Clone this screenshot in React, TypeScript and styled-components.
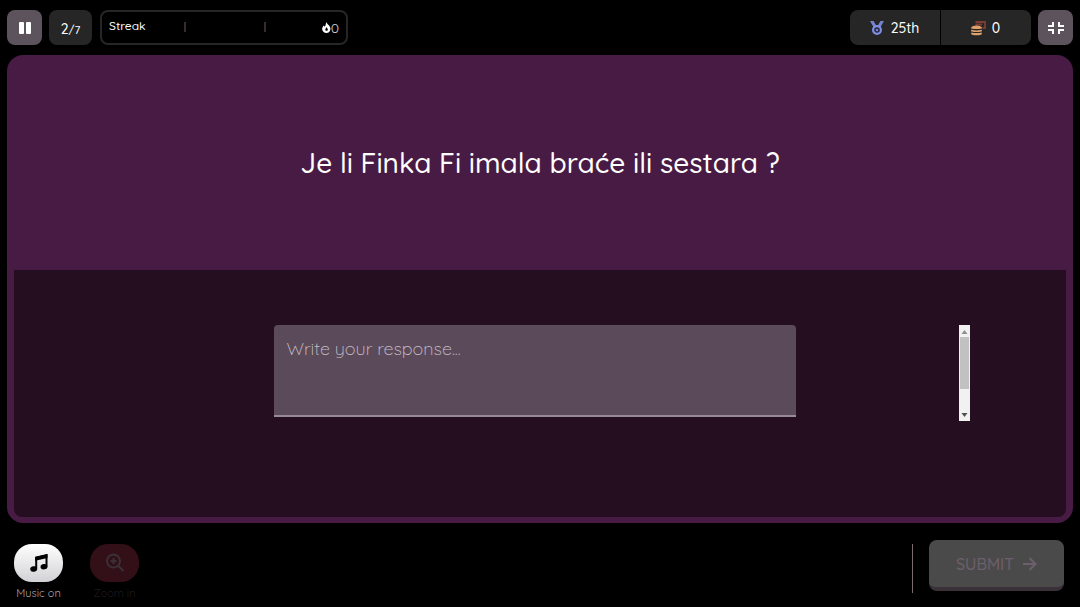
import React from "react";
import styled, { createGlobalStyle } from "styled-components";

const GlobalStyle = createGlobalStyle`
  *, *::before, *::after { box-sizing: border-box; }
  body {
    margin: 0;
    background: #000;
    color: #fff;
    font-family: Quicksand, "Open Sans", "Noto Sans", sans-serif;
    font-weight: 500;
  }
  button, textarea { font: inherit; color: inherit; }
`;

const Page = styled.div`
  display: flex;
  flex-direction: column;
  min-height: 100vh;
`;

const Header = styled.header`
  display: flex;
  justify-content: space-between;
  padding: 10px 7px;
`;

const Group = styled.div<{ $gap: number }>`
  display: flex;
  gap: ${(p) => p.$gap}px;
`;

const IconButton = styled.button`
  display: grid;
  place-items: center;
  width: 35px;
  height: 35px;
  padding: 0;
  border: 0;
  border-radius: 8px;
  background: #5d535c;
`;

const Counter = styled.div`
  display: flex;
  align-items: baseline;
  justify-content: center;
  width: 43px;
  height: 35px;
  border-radius: 8px;
  background: #262626;
  font-size: 14px;
  line-height: 38px;
`;

const Total = styled.span`
  font-size: 11px;
`;

const Streak = styled.div`
  display: flex;
  width: 248px;
  height: 35px;
  margin-left: 1px;
  padding: 0 7px;
  border: 2px solid #262626;
  border-radius: 8px;
  font-size: 12px;
`;

const StreakLabel = styled.span`
  width: 75px;
  line-height: 28px;
`;

const Tick = styled.span`
  width: 2px;
  height: 10px;
  margin-top: 10px;
  background: #332d31;
`;

const StreakGap = styled.span`
  width: 78px;
`;

const StreakCount = styled.span`
  display: flex;
  flex: 1;
  align-items: center;
  justify-content: flex-end;
  color: #d0cbd0;
  font-size: 14px;
  font-weight: 400;
`;

const Stats = styled.div`
  display: flex;
  gap: 1px;
  border-radius: 8px;
  overflow: hidden;
`;

const Stat = styled.div`
  display: flex;
  align-items: center;
  justify-content: center;
  gap: 6px;
  width: 90px;
  height: 35px;
  padding-right: 2px;
  background: #262626;
  font-size: 14px;
`;

const Card = styled.main`
  display: flex;
  flex: 1;
  flex-direction: column;
  margin: 0 7px;
  padding: 0 7px 6px;
  border-radius: 16px;
  background: #481b44;
`;

const Question = styled.h1`
  display: grid;
  place-items: center;
  min-height: 215px;
  margin: 0;
  font-size: 28px;
  font-weight: 500;
  text-align: center;
`;

const Answer = styled.section`
  flex: 1;
  padding: 55px 96px;
  border-radius: 0 0 8px 8px;
  background: #240e20;
`;

const ScrollArea = styled.div`
  display: flex;
  height: 96px;
`;

const FieldSlot = styled.div`
  display: flex;
  flex: 1;
  justify-content: center;
`;

const Response = styled.textarea`
  display: block;
  width: 62%;
  max-width: 522px;
  height: 92px;
  padding: 12px 13px;
  border: 0;
  border-bottom: 2px solid #958a95;
  border-radius: 4px 4px 0 0;
  outline: 0;
  resize: none;
  background: #5b4a5a;
  font-size: 18px;
  font-weight: 300;
  line-height: 24px;
  &::placeholder { color: #c9c0c9; opacity: 1; }
`;

const ScrollTrack = styled.div`
  display: flex;
  flex-direction: column;
  align-items: center;
  width: 11px;
  background: #f1f1f1;
`;

const ScrollThumb = styled.div`
  width: 9px;
  height: 52px;
  background: #c1c1c1;
`;

const ScrollArrow = styled.svg`
  display: block;
  flex: none;
  width: 11px;
  height: 12px;
`;

const Spacer = styled.div`
  flex: 1;
`;

const Footer = styled.footer`
  display: flex;
  justify-content: space-between;
  height: 84px;
  padding: 17px 16px 0 14px;
`;

const Tool = styled.button<{ $muted?: boolean }>`
  display: flex;
  flex-direction: column;
  align-items: center;
  width: 49px;
  height: 62px;
  margin-top: 4px;
  padding: 0;
  border: 0;
  background: none;
  color: ${(p) => (p.$muted ? "#1f191c" : "#b0a0ae")};
  font-size: 11px;
  font-weight: 400;
  line-height: 22px;
  white-space: nowrap;
`;

const Pill = styled.span<{ $muted?: boolean }>`
  display: grid;
  place-items: center;
  width: 49px;
  height: 38px;
  border-radius: 18px;
  background: ${(p) => (p.$muted ? "#330f18" : "linear-gradient(#fff, #d2d2d6)")};
`;

const Divider = styled.span`
  width: 1px;
  height: 49px;
  margin-top: 4px;
  background: #7a6b75;
`;

const Submit = styled.button`
  display: flex;
  align-items: center;
  justify-content: center;
  gap: 8px;
  width: 135px;
  height: 51px;
  padding: 0;
  border: 0;
  border-bottom: 4px solid #3a3238;
  border-radius: 8px;
  background: #4a4a4a;
  color: #6d606c;
  font-size: 16px;
`;

export default function App() {
  return (
    <Page>
      <GlobalStyle />
      <Header>
        <Group $gap={7}>
          <IconButton aria-label="Pause">
            <svg width="14" height="14" viewBox="0 0 14 14" fill="#fff">
              <rect x="1" y="1" width="5" height="12" rx="1" />
              <rect x="8" y="1" width="5" height="12" rx="1" />
            </svg>
          </IconButton>
          <Counter>2<Total>/7</Total></Counter>
          <Streak>
            <StreakLabel>Streak</StreakLabel>
            <Tick />
            <StreakGap />
            <Tick />
            <StreakCount>
              <svg width="9" height="11" viewBox="0 0 9 11">
                <path d="M4.4 0C4.8 2 7 2.800 8 5C9.300 8.200 7.200 11 4.500 11C1.600 11-.4 8.700.3 6C.6 4.700 1.300 4 1.900 3.400L2.600 4.800C3.900 3.500 3.800 1.500 4.400 0Z" fill="#fff" />
                <path d="M4.600 5C5 6.200 6 6.600 5.800 7.900C5.500 9.100 3.700 9.100 3.300 7.900C3 6.800 4.300 6.200 4.600 5Z" fill="#000" />
              </svg>
              0
            </StreakCount>
          </Streak>
        </Group>
        <Group $gap={7}>
          <Stats>
            <Stat>
              <svg width="16" height="16" viewBox="0 0 16 16">
                <path d="M1 1H4.500L7.500 6L5 8ZM15 1H11.500L8.500 6L11 8Z" fill="#7583cf" />
                <circle cx="8" cy="10" r="3.900" fill="#262338" stroke="#7e8ee0" strokeWidth="2.200" />
                <path d="M8 8.300L8.600 9.500L9.800 9.600L8.900 10.400L9.200 11.600L8 11L6.800 11.600L7.100 10.400L6.200 9.600L7.400 9.500Z" fill="#7e8ee0" />
              </svg>
              25th
            </Stat>
            <Stat>
              <svg width="16" height="16" viewBox="0 0 16 16">
                <g fill="none" stroke="#7d3d35" strokeWidth="1.800">
                  <path d="M5.500 2H15V8H12.500M5.500 4.500H12" />
                </g>
                <g fill="#dda06d">
                  <path d="M1 8Q1.500 5.500 6.500 5.500T12 8Q12 9 6.500 9T1 8Z" />
                  <path d="M1.500 9.800Q6.500 11 11.500 9.800Q12.800 10.700 11.500 11.500Q6.500 12.600 1.500 11.500Q.3 10.700 1.500 9.800Z" />
                  <path d="M1.500 12.500Q6.500 13.700 11.500 12.500Q12.800 14 11 14.700Q6.500 15.700 2 14.700Q.3 14 1.500 12.500Z" />
                </g>
              </svg>
              0
            </Stat>
          </Stats>
          <IconButton aria-label="Exit full screen">
            <svg width="18" height="14" viewBox="0 0 18 14" fill="none" stroke="#fff" strokeWidth="2">
              <path d="M1 5H6V1M17 5H12V1M1 9H6V13M17 9H12V13" />
            </svg>
          </IconButton>
        </Group>
      </Header>

      <Card>
        <Question>Je li Finka Fi imala braće ili sestara ?</Question>
        <Answer>
          <ScrollArea>
            <FieldSlot>
              <Response aria-label="Your response" placeholder="Write your response..." />
            </FieldSlot>
            <ScrollTrack aria-hidden="true">
              <ScrollArrow viewBox="0 0 11 12"><path d="M2.500 9L5.500 5L8.500 9Z" fill="#8f8f8f" /></ScrollArrow>
              <ScrollThumb />
              <Spacer />
              <ScrollArrow viewBox="0 0 11 12"><path d="M2.500 4L5.500 8L8.500 4Z" fill="#505050" /></ScrollArrow>
            </ScrollTrack>
          </ScrollArea>
        </Answer>
      </Card>

      <Footer>
        <Group $gap={27}>
          <Tool>
            <Pill>
              <svg width="20" height="20" viewBox="0 0 20 20">
                <path d="M7.200 15.500V4.700L17.500 2.300V13.500" fill="none" stroke="#000" strokeWidth="2" />
                <path d="M6.200 3.700L18.500 1V5L6.200 7.700Z" />
                <ellipse cx="4.700" cy="16" rx="3.500" ry="2.700" transform="rotate(-12 4.700 16)" />
                <ellipse cx="15" cy="13.700" rx="3.500" ry="2.700" transform="rotate(-12 15 13.700)" />
              </svg>
            </Pill>
            Music on
          </Tool>
          <Tool $muted disabled>
            <Pill $muted>
              <svg width="20" height="20" viewBox="0 0 20 20" fill="none" stroke="#3b3036" strokeWidth="2">
                <circle cx="8.500" cy="8" r="6.500" />
                <path d="M13 12.500L18.500 18M8.500 5V11M5.500 8H11.500" />
              </svg>
            </Pill>
            Zoom in
          </Tool>
        </Group>
        <Group $gap={16}>
          <Divider />
          <Submit disabled>
            SUBMIT
            <svg width="15" height="14" viewBox="0 0 15 14" fill="none" stroke="currentColor" strokeWidth="2">
              <path d="M1 7H13M7.500 1L13.500 7L7.500 13" />
            </svg>
          </Submit>
        </Group>
      </Footer>
    </Page>
  );
}
